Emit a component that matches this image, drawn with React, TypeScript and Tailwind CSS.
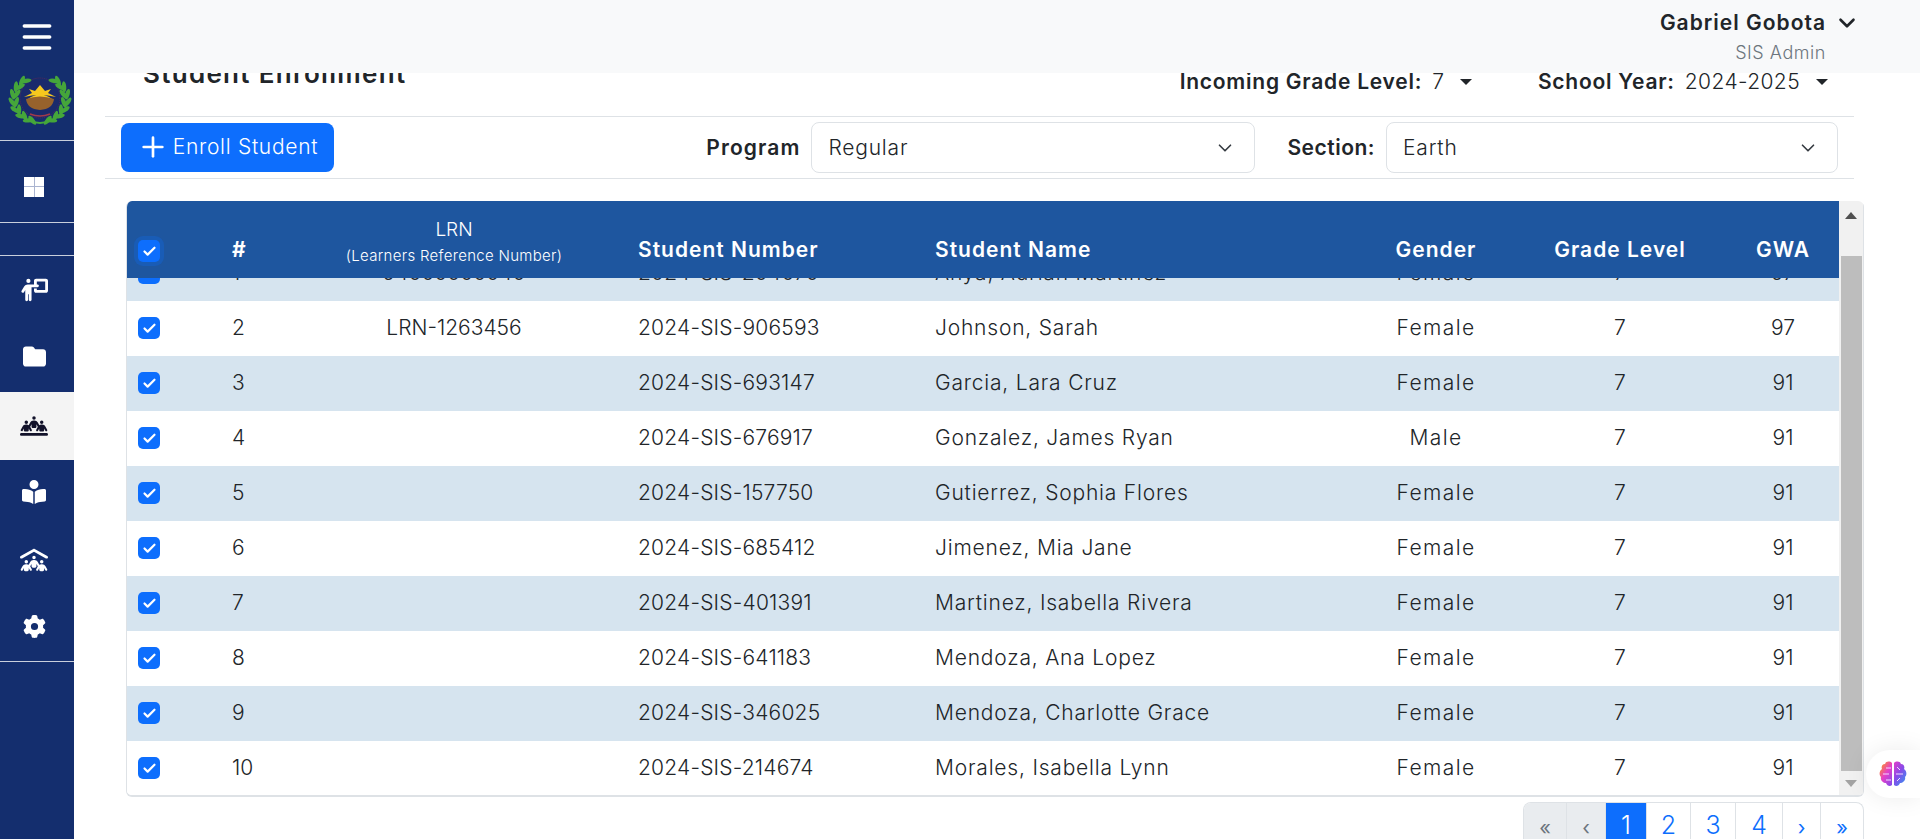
import React from 'react';
import { ChevronDown, Plus, Check, Menu } from 'lucide-react';
import {
  FaPersonChalkboard,
  FaFolder,
  FaPeopleLine,
  FaBookOpenReader,
  FaPeopleRoof,
  FaGear,
} from 'react-icons/fa6';

const cols = 'grid grid-cols-[105px_38px_368px_297px_401px_200px_168px_135px]';

const students = [
  { no: 1, lrn: '94000000040', sn: '2024-SIS-204070', name: 'Anya, Adrian Martinez', gender: 'Female', gwa: 97 },
  { no: 2, lrn: 'LRN-1263456', sn: '2024-SIS-906593', name: 'Johnson, Sarah', gender: 'Female', gwa: 97 },
  { no: 3, lrn: '', sn: '2024-SIS-693147', name: 'Garcia, Lara Cruz', gender: 'Female', gwa: 91 },
  { no: 4, lrn: '', sn: '2024-SIS-676917', name: 'Gonzalez, James Ryan', gender: 'Male', gwa: 91 },
  { no: 5, lrn: '', sn: '2024-SIS-157750', name: 'Gutierrez, Sophia Flores', gender: 'Female', gwa: 91 },
  { no: 6, lrn: '', sn: '2024-SIS-685412', name: 'Jimenez, Mia Jane', gender: 'Female', gwa: 91 },
  { no: 7, lrn: '', sn: '2024-SIS-401391', name: 'Martinez, Isabella Rivera', gender: 'Female', gwa: 91 },
  { no: 8, lrn: '', sn: '2024-SIS-641183', name: 'Mendoza, Ana Lopez', gender: 'Female', gwa: 91 },
  { no: 9, lrn: '', sn: '2024-SIS-346025', name: 'Mendoza, Charlotte Grace', gender: 'Female', gwa: 91 },
  { no: 10, lrn: '', sn: '2024-SIS-214674', name: 'Morales, Isabella Lynn', gender: 'Female', gwa: 91 },
];

const pages = [
  { label: '«', w: 'w-[42px]', kind: 'off' },
  { label: '‹', w: 'w-[39px]', kind: 'off' },
  { label: '1', w: 'w-[41px]', kind: 'on' },
  { label: '2', w: 'w-[44px]', kind: 'big' },
  { label: '3', w: 'w-[45px]', kind: 'big' },
  { label: '4', w: 'w-[47px]', kind: 'big' },
  { label: '›', w: 'w-[38px]', kind: 'link' },
  { label: '»', w: 'w-[43px]', kind: 'link' },
];

const Box = ({ ring }: { ring?: boolean }) => (
  <span
    className={`flex h-[22px] w-[22px] items-center justify-center rounded-[5px] bg-[#0d6efd] ${
      ring ? 'shadow-[0_0_0_4px_rgba(13,110,253,0.25)]' : ''
    }`}
  >
    <Check size={15} strokeWidth={3.5} className="text-white" />
  </span>
);

const Caret = () => (
  <span className="ml-[16px] h-0 w-0 border-x-[6px] border-t-[6px] border-x-transparent border-t-[#212529]" />
);

// laurel wreath + sun, small enough that rough shapes hold up
const wreath = [22, 42, 62, 82, 102, 122, 142].map((t) => {
  const r = (t * Math.PI) / 180;
  return { t, x: 32 - 26 * Math.sin(r), y: 26 + 23 * Math.cos(r) };
});

const Logo = () => (
  <svg viewBox="0 0 64 52" className="h-[52px] w-[64px]">
    <circle cx="32" cy="25" r="20" fill="#1a2a6c" stroke="#6d2a55" strokeWidth="0.7" strokeDasharray="1 1" />
    <g fill="#45a63a">
      {wreath.map(({ t, x, y }) => (
        <g key={t}>
          <ellipse cx={x - 2} cy={y} rx="2.2" ry="5.5" transform={`rotate(${t - 90 - 28} ${x - 2} ${y})`} />
          <ellipse cx={x + 2} cy={y} rx="2.2" ry="5.5" transform={`rotate(${t - 90 + 28} ${x + 2} ${y})`} />
          <ellipse cx={66 - x} cy={y} rx="2.2" ry="5.5" transform={`rotate(${90 - t + 28} ${66 - x} ${y})`} />
          <ellipse cx={62 - x} cy={y} rx="2.2" ry="5.5" transform={`rotate(${90 - t - 28} ${62 - x} ${y})`} />
        </g>
      ))}
      <path d="M14 47 Q24 50 32 51 Q40 50 50 47 Q40 48 32 49 Q24 48 14 47Z" />
    </g>
    <path d="M16 24 L24 20 L21 16 L27 18 L32 12 L37 18 L43 16 L40 20 L48 24 Q32 20 16 24Z" fill="#f6c81e" />
    <path d="M20 26 Q32 17 44 26Z" fill="#f6c81e" />
    <path d="M18 26 Q32 21 46 26 Q45 36 32 37 Q19 36 18 26Z" fill="#97622c" />
    <path d="M22 41 Q32 45 42 41" stroke="#a23a4a" strokeWidth="1.4" fill="none" />
  </svg>
);

const Brain = () => (
  <svg viewBox="0 0 28 26" className="h-[26px] w-[28px]">
    <defs>
      <linearGradient id="brainFill" x1="0" y1="0.2" x2="1" y2="0.8">
        <stop offset="0" stopColor="#fb8a2e" />
        <stop offset="0.3" stopColor="#e63fc8" />
        <stop offset="0.65" stopColor="#8a4ae8" />
        <stop offset="1" stopColor="#3d8bf0" />
      </linearGradient>
    </defs>
    <path
      d="M13 2 C11 0 7 0 6 3 C3 3 2 6 3 8 C0 10 0 14 2 16 C1 19 4 22 7 22 C8 25 11 26 13 24 Z M15 2 C17 0 21 0 22 3 C25 3 26 6 25 8 C28 10 28 14 26 16 C27 19 24 22 21 22 C20 25 17 26 15 24 Z"
      fill="url(#brainFill)"
    />
    <path
      d="M4 13 H10 M7 7 H12 M7 19 H12 M18 6 L21 9 M17 13 H24 M18 20 L21 17"
      stroke="#f3d9ff"
      strokeWidth="1"
      fill="none"
    />
  </svg>
);

const SideItem = ({ children, active, up }: { children: React.ReactNode; active?: boolean; up?: boolean }) => (
  <div
    className={`flex h-[68px] items-center justify-center pr-[6px] ${
      active ? 'bg-[#f4f4f4] text-[#12122a]' : 'text-white'
    } ${up ? 'pb-[4px]' : ''}`}
  >
    {children}
  </div>
);

const Select = ({ value, w }: { value: string; w: string }) => (
  <div
    className={`flex h-[51px] ${w} items-center justify-between rounded-[8px] border border-[#dee2e6] bg-white pl-[16px] pr-[18px]`}
  >
    <span className="text-[21px] font-light tracking-[0.8px] text-[#212529]">{value}</span>
    <ChevronDown size={22} strokeWidth={1.8} className="text-[#343a40]" />
  </div>
);

export default function App() {
  return (
    <div className="flex h-screen w-screen overflow-hidden bg-white font-['Inter',sans-serif] text-[#212529]">
      <aside className="z-20 flex w-[74px] shrink-0 flex-col bg-[#142e6e] text-white">
        <div className="flex h-[141px] flex-col items-center border-b border-[#c9cfdc]">
          <Menu size={38} strokeWidth={2.2} className="mt-[18px]" />
          <div className="mt-[17px] ml-[5px]">
            <Logo />
          </div>
        </div>
        <div className="flex h-[82px] items-center justify-center border-b border-[#c9cfdc] pr-[6px] pt-[10px]">
          <div className="grid h-[20px] w-[20px] grid-cols-2 gap-[1px] bg-[#aab4d0]">
            <span className="bg-white" />
            <span className="bg-white" />
            <span className="bg-white" />
            <span className="bg-white" />
          </div>
        </div>
        <div className="h-[33px] border-b border-[#c9cfdc]" />
        <SideItem>
          <FaPersonChalkboard size={28} />
        </SideItem>
        <SideItem up>
          <FaFolder size={23} />
        </SideItem>
        <SideItem active>
          <FaPeopleLine size={28} />
        </SideItem>
        <SideItem up>
          <FaBookOpenReader size={24} />
        </SideItem>
        <SideItem up>
          <FaPeopleRoof size={28} />
        </SideItem>
        <div className="flex h-[66px] items-center justify-center border-b border-[#c9cfdc] pb-[4px] pr-[6px]">
          <FaGear size={23} />
        </div>
      </aside>

      <main className="relative min-w-0 flex-1">
        <header className="relative z-10 flex h-[73px] flex-col items-end bg-[#f8f9fa] pr-[94px] pt-[7px]">
          <div className="relative flex items-center">
            <span className="text-[21px] font-semibold tracking-[1px]">Gabriel Gobota</span>
            <ChevronDown size={26} strokeWidth={2.4} className="absolute left-[100%] ml-[8px]" />
          </div>
          <span className="text-[18px] font-light tracking-[0.55px] text-[#6c757d]">SIS Admin</span>
        </header>

        <div className="ml-[31px] w-[1749px]">
          <div className="flex h-[44px] items-start border-b border-[#dee2e6] pl-[38px] pr-[26px]">
            <h1 className="-mt-[15px] text-[26px] font-semibold leading-[32px] tracking-[1.3px]">Student Enrollment</h1>
            <div className="-mt-[7px] ml-auto flex items-center text-[21px]">
              <span className="font-semibold tracking-[0.76px]">Incoming Grade Level:</span>
              <span className="ml-[10px] font-light">7</span>
              <Caret />
              <span className="ml-[66px] font-semibold tracking-[0.76px]">School Year:</span>
              <span className="ml-[10px] font-light tracking-[0.4px]">2024-2025</span>
              <Caret />
            </div>
          </div>

          <div className="flex h-[62px] items-center border-b border-[#dee2e6] pl-[16px] pr-[16px]">
            <button className="-mt-[1px] flex h-[49px] w-[213px] items-center justify-center gap-[4px] rounded-[8px] bg-[#0d6efd] text-[21px] font-light tracking-[0.7px] text-white">
              <Plus size={32} strokeWidth={2} />
              Enroll Student
            </button>
            <span className="ml-auto mr-[11px] text-[21px] font-semibold tracking-[1.1px]">Program</span>
            <Select value="Regular" w="w-[444px]" />
            <span className="ml-[32px] mr-[11px] text-[21px] font-semibold tracking-[0.5px]">Section:</span>
            <Select value="Earth" w="w-[452px]" />
          </div>

          <div className="ml-[21px] mt-[22px] flex h-[596px] w-[1738px] overflow-hidden rounded-[6px] border-b-2 border-l border-[#dee2e6]">
            <div className="min-w-0 flex-1 overflow-hidden">
              <div className={`${cols} relative z-[1] h-[77px] items-end bg-[#1e569f] pb-[16px] text-white`}>
                <span className="pl-[11px]">
                  <Box ring />
                </span>
                <span className="-mb-[3px] text-[21px] font-bold">#</span>
                <div className="-mb-[6px] flex flex-col items-center text-center">
                  <span className="text-[19px] font-light leading-[28px]">LRN</span>
                  <span className="text-[15px] font-light leading-[24px] tracking-[0.3px]">(Learners Reference Number)</span>
                </div>
                <span className="-mb-[3px] text-[21px] font-semibold tracking-[1px]">Student Number</span>
                <span className="-mb-[3px] text-[21px] font-semibold tracking-[1px]">Student Name</span>
                <span className="-mb-[3px] text-center text-[21px] font-semibold tracking-[1px]">Gender</span>
                <span className="-mb-[3px] text-center text-[21px] font-semibold tracking-[1px]">Grade Level</span>
                <span className="-mb-[3px] pl-[23px] text-center text-[21px] font-semibold tracking-[1px]">GWA</span>
              </div>
              <div className="-mt-[32px]">
                {students.map((s, i) => (
                  <div
                    key={s.no}
                    className={`${cols} h-[55px] items-center pb-[1px] text-[21px] font-light ${
                      i % 2 === 0 ? 'bg-[#d6e4ef]' : 'bg-white'
                    }`}
                  >
                    <span className="pl-[11px]">
                      <Box />
                    </span>
                    <span>{s.no}</span>
                    <span className="text-center">{s.lrn}</span>
                    <span className="tracking-[0.2px]">{s.sn}</span>
                    <span className="tracking-[0.8px]">{s.name}</span>
                    <span className="text-center tracking-[1.4px]">{s.gender}</span>
                    <span className="text-center">7</span>
                    <span className="pl-[23px] text-center">{s.gwa}</span>
                  </div>
                ))}
              </div>
            </div>
            <div className="flex w-[25px] shrink-0 flex-col items-center border-r border-[#dee2e6] bg-[#f1f1f1]">
              <span className="mt-[11px] h-0 w-0 border-x-[6px] border-b-[7px] border-x-transparent border-b-[#505050]" />
              <span className="mt-[37px] h-[515px] w-[21px] bg-[#bdbdbd]" />
              <span className="mt-[9px] h-0 w-0 border-x-[6px] border-t-[7px] border-x-transparent border-t-[#a3a3a3]" />
            </div>
          </div>

          <div className="ml-[22px] mt-[5px] flex w-[1737px] justify-end">
            <div className="flex h-[37px] overflow-hidden rounded-t-[8px] border border-b-0 border-[#dee2e6]">
              {pages.map((p) => (
                <span
                  key={p.label}
                  className={`flex ${p.w} items-end justify-center border-l border-[#dee2e6] pb-[1px] leading-none first:border-l-0 ${
                    p.kind === 'off'
                      ? 'bg-[#e9ecef] text-[20px] text-[#6c757d]'
                      : p.kind === 'on'
                        ? 'bg-[#0d6efd] text-[25px] font-light text-white'
                        : p.kind === 'big'
                          ? 'text-[25px] font-light text-[#0d6efd]'
                          : 'text-[20px] text-[#0d6efd]'
                  }`}
                >
                  {p.label}
                </span>
              ))}
            </div>
          </div>
        </div>

        <div className="absolute right-0 top-[750px] z-20 flex h-[48px] w-[54px] items-center rounded-l-[24px] bg-white pl-[13px] shadow-[0_0_24px_rgba(0,0,0,0.08)]">
          <Brain />
        </div>
      </main>
    </div>
  );
}
